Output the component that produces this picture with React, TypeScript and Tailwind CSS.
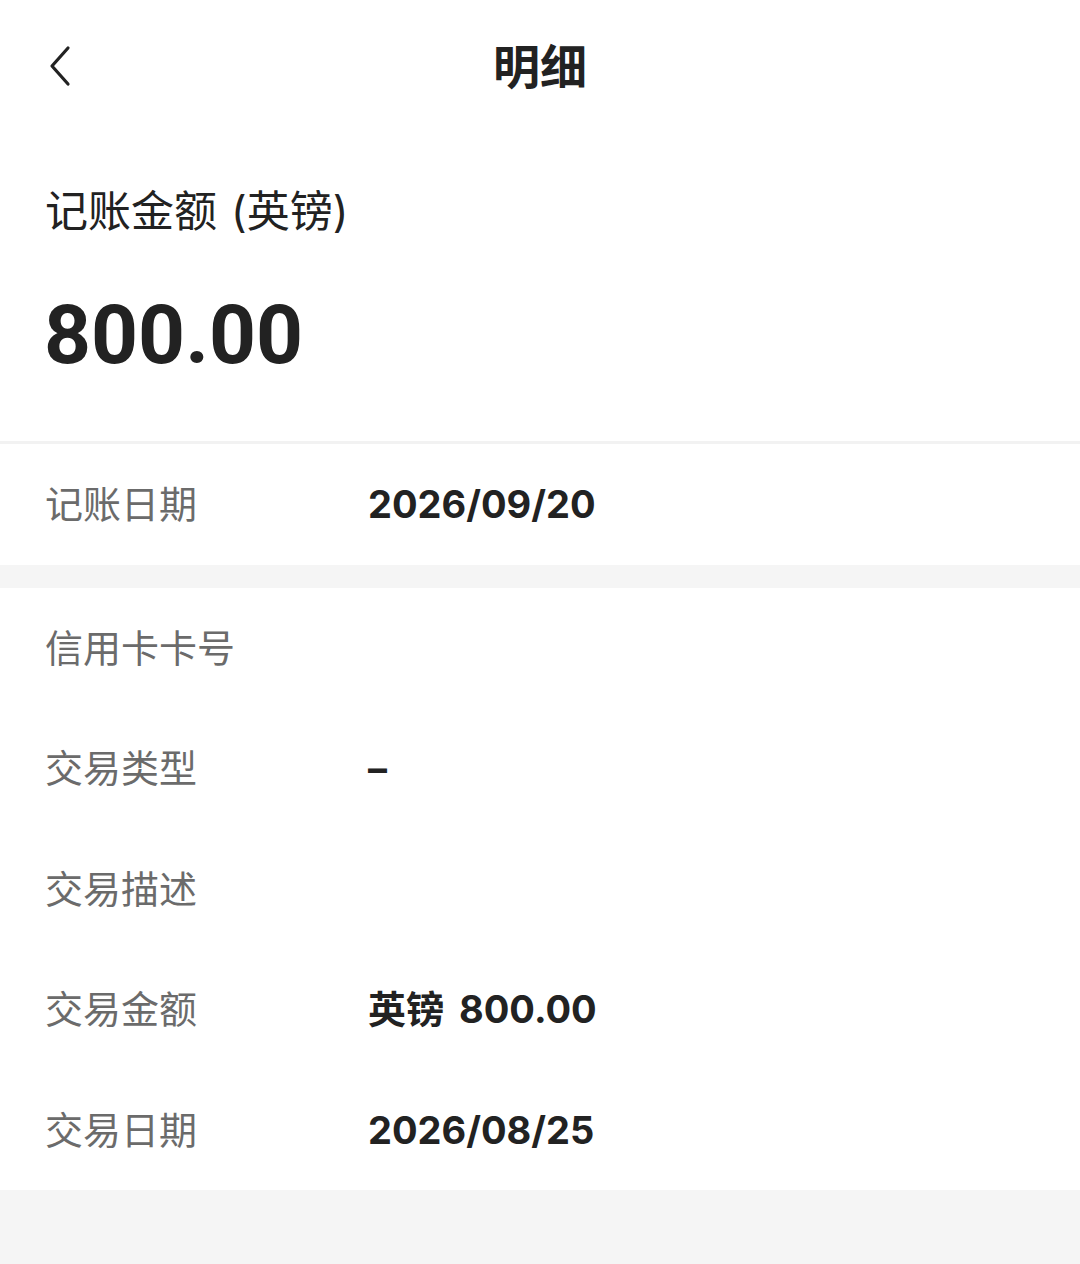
import React from "react";

const rowsA = [{ label: "记账日期", value: "2026/09/20" }];

const rowsB = [
  { label: "信用卡卡号", value: "" },
  { label: "交易类型", value: "–" },
  { label: "交易描述", value: "" },
  { label: "交易金额", value: "英镑 800.00" },
  { label: "交易日期", value: "2026/08/25" },
];

function Row({ label, value }: { label: string; value: string }) {
  const parts = value.split(" ");
  return (
    <div className="flex items-center h-[120.5px] pl-[45px]">
      <div className="w-[323px] shrink-0 text-[38px] text-[#6b6b6b] leading-none">{label}</div>
      <div className="flex gap-[15px] text-[38px] font-bold text-[#222222] leading-none">
        {parts.map((p, i) => (
          <span key={i}>{p}</span>
        ))}
      </div>
    </div>
  );
}

export default function App() {
  return (
    <div
      className="w-[1080px] h-[1264px] bg-[#f5f5f5] overflow-hidden"
      style={{ fontFamily: "Inter, 'Noto Sans CJK SC', sans-serif" }}
    >
      {/* Top card */}
      <div className="bg-white">
        <div className="relative h-[136px] flex items-center justify-center">
          <button className="absolute left-[44px] top-[44px] w-[30px] h-[44px] flex items-center justify-center">
            <svg width="26" height="42" viewBox="0 0 26 42" fill="none">
              <path d="M22 3 L6 21 L22 39" stroke="#222" strokeWidth="3.2" strokeLinecap="round" strokeLinejoin="round" />
            </svg>
          </button>
          <h1 className="text-[47px] font-bold text-[#222] -mt-[2px]">明细</h1>
        </div>
        <div className="pl-[45px] pt-[54px] text-[43px] text-[#222] leading-none">
          记账金额 <span className="ml-[2px]">(</span>英镑<span>)</span>
        </div>
        <div
          className="pl-[44px] pt-[61px] pb-[65px] text-[82px] font-bold text-[#222] leading-none"
          style={{ fontFamily: "Roboto, 'Noto Sans CJK SC', sans-serif" }}
        >
          800.00
        </div>
        <div className="h-[3px] bg-[#f2f2f2]" />
        {rowsA.map((r) => (
          <Row key={r.label} {...r} />
        ))}
      </div>

      <div className="h-[23px]" />

      <div className="bg-white">
        {rowsB.map((r) => (
          <Row key={r.label} {...r} />
        ))}
      </div>
    </div>
  );
}
